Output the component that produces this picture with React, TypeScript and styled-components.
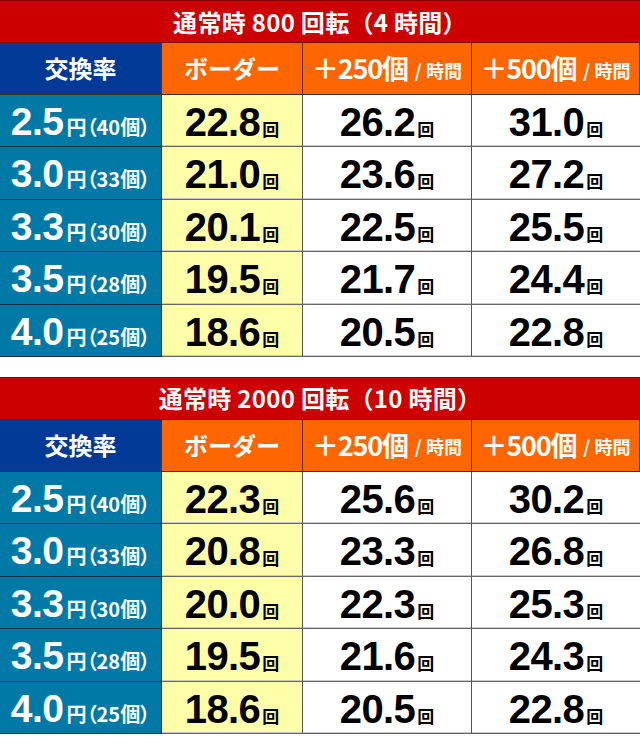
import styled, { createGlobalStyle } from "styled-components";

const GlobalStyle = createGlobalStyle`
  html, body {
    margin: 0;
    padding: 0;
    background: #ffffff;
  }
  body {
    font-family: "Liberation Sans", "Noto Sans CJK JP", sans-serif;
  }
`;

const Page = styled.div`
  width: 640px;
  display: flex;
  flex-direction: column;
  gap: 20px;
`;

const Table = styled.div`
  display: grid;
  grid-template-columns: 162px 141px 169px 168px;
  grid-template-rows: 43px 52px repeat(5, 52.4px);
`;

const TitleBar = styled.div`
  grid-column: 1 / -1;
  background: #cc0000;
  border-top: 1px solid #8a0000;
  border-bottom: 1px solid #7a1010;
  box-sizing: border-box;
  display: flex;
  align-items: center;
  justify-content: center;
  color: #ffffff;
  font-family: "Noto Sans CJK JP", sans-serif;
  font-weight: 700;
  font-size: 24px;
  letter-spacing: 0.3px;
  padding-bottom: 1px;
`;

const HeadCell = styled.div<{ $bg: string }>`
  background: ${(p) => p.$bg};
  border-right: 1px solid #5a2a10;
  border-bottom: 1px solid #4a2a1a;
  box-sizing: border-box;
  display: flex;
  align-items: center;
  justify-content: center;
  color: #ffffff;
  font-family: "Noto Sans CJK JP", sans-serif;
  font-weight: 700;
  font-size: 24px;
  padding-bottom: 2px;

  &:last-child {
    border-right: none;
  }
`;

const HeadBig = styled.span`
  font-size: 27px;
  letter-spacing: -1.2px;
  font-feature-settings: "palt";
`;

const HeadSmall = styled.span`
  font-size: 18px;
  margin-left: 7px;
  margin-top: 4px;
`;

const RateCell = styled.div`
  background: #0079a6;
  border-right: 1px solid #1d2f3e;
  border-bottom: 1px solid #1d2f3e;
  box-sizing: border-box;
  display: flex;
  align-items: baseline;
  justify-content: center;
  padding-top: 5px;
  color: #ffffff;
  font-weight: 700;
`;

const RateNum = styled.span`
  font-family: "Liberation Sans", sans-serif;
  font-size: 39px;
  letter-spacing: -0.5px;
`;

const RateSub = styled.span`
  font-family: "Noto Sans CJK JP", sans-serif;
  font-size: 20px;
  margin-left: 3px;
  font-feature-settings: "palt";
`;

const ValueCell = styled.div<{ $bg: string; $last?: boolean }>`
  background: ${(p) => p.$bg};
  border-right: ${(p) => (p.$last ? "none" : "1px solid #555555")};
  border-bottom: 1px solid #666666;
  box-shadow: inset 0 -1px 0 #c8c8c8;
  box-sizing: border-box;
  display: flex;
  align-items: baseline;
  justify-content: center;
  padding-top: 5px;
  color: #000000;
  font-weight: 700;
`;

const ValueNum = styled.span`
  font-family: "Liberation Sans", sans-serif;
  font-size: 40px;
  letter-spacing: -0.6px;
`;

const Unit = styled.span`
  font-family: "Noto Sans CJK JP", sans-serif;
  font-size: 17px;
  margin-left: 2px;
`;

type Row = { rate: string; pieces: string; values: [string, string, string] };

const table800: Row[] = [
  { rate: "2.5", pieces: "40", values: ["22.8", "26.2", "31.0"] },
  { rate: "3.0", pieces: "33", values: ["21.0", "23.6", "27.2"] },
  { rate: "3.3", pieces: "30", values: ["20.1", "22.5", "25.5"] },
  { rate: "3.5", pieces: "28", values: ["19.5", "21.7", "24.4"] },
  { rate: "4.0", pieces: "25", values: ["18.6", "20.5", "22.8"] },
];

const table2000: Row[] = [
  { rate: "2.5", pieces: "40", values: ["22.3", "25.6", "30.2"] },
  { rate: "3.0", pieces: "33", values: ["20.8", "23.3", "26.8"] },
  { rate: "3.3", pieces: "30", values: ["20.0", "22.3", "25.3"] },
  { rate: "3.5", pieces: "28", values: ["19.5", "21.6", "24.3"] },
  { rate: "4.0", pieces: "25", values: ["18.6", "20.5", "22.8"] },
];

const BorderTable = ({ title, rows }: { title: string; rows: Row[] }) => (
  <Table>
    <TitleBar>{title}</TitleBar>
    <HeadCell $bg="#003a96">交換率</HeadCell>
    <HeadCell $bg="#ff6600">ボーダー</HeadCell>
    <HeadCell $bg="#ff6600">
      <HeadBig>＋250個</HeadBig>
      <HeadSmall>/ 時間</HeadSmall>
    </HeadCell>
    <HeadCell $bg="#ff6600">
      <HeadBig>＋500個</HeadBig>
      <HeadSmall>/ 時間</HeadSmall>
    </HeadCell>
    {rows.map((row) => [
      <RateCell key={row.rate + "r"}>
        <RateNum>{row.rate}</RateNum>
        <RateSub>円（{row.pieces}個）</RateSub>
      </RateCell>,
      ...row.values.map((v, i) => (
        <ValueCell key={row.rate + i} $bg={i === 0 ? "#ffffaa" : "#ffffff"} $last={i === 2}>
          <ValueNum>{v}</ValueNum>
          <Unit>回</Unit>
        </ValueCell>
      )),
    ])}
  </Table>
);

const App = () => (
  <>
    <GlobalStyle />
    <Page>
      <BorderTable title="通常時 800 回転（4 時間）" rows={table800} />
      <BorderTable title="通常時 2000 回転（10 時間）" rows={table2000} />
    </Page>
  </>
);

export default App;
